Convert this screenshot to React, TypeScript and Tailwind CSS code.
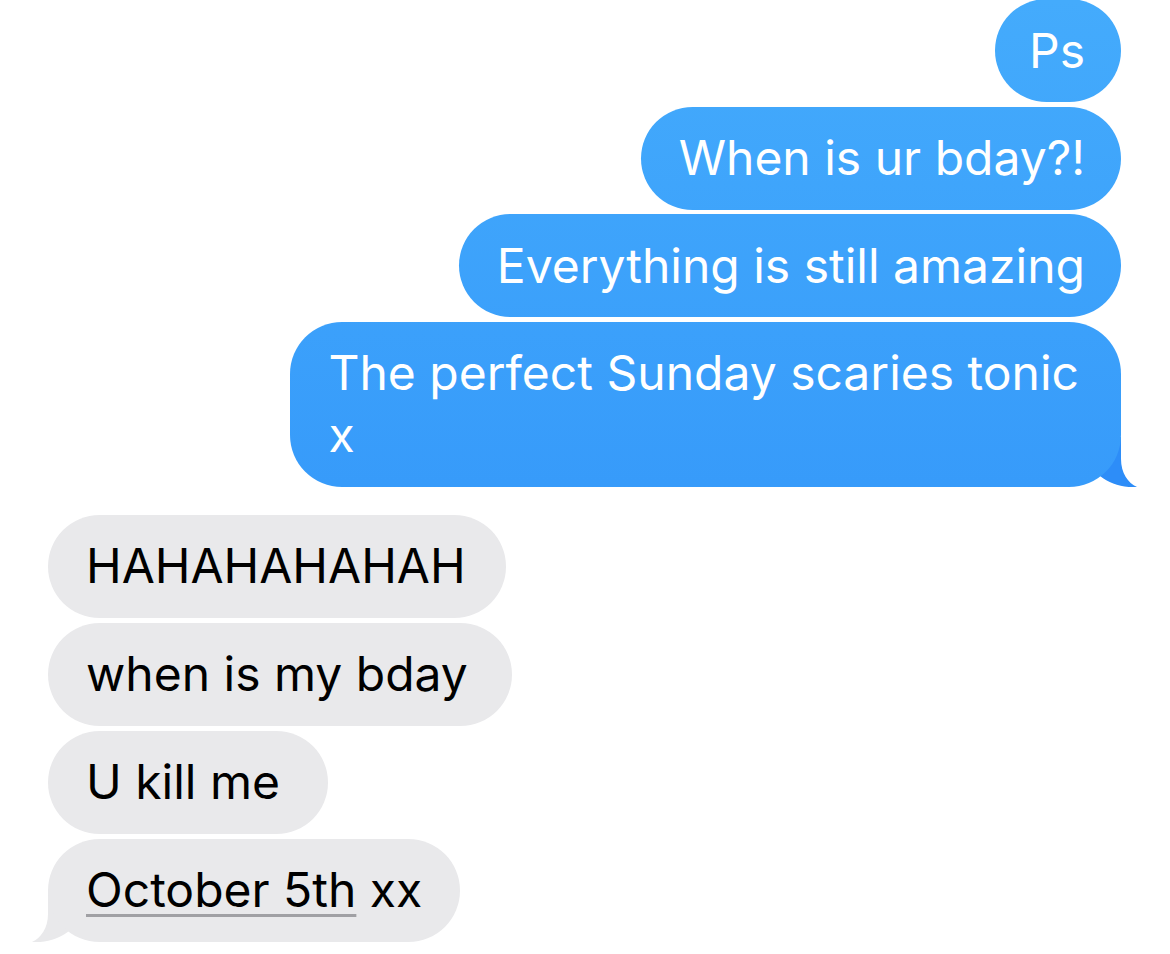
import React from "react";

const font = { fontFamily: "Inter, 'Liberation Sans', Arial, sans-serif" };

function BlueTail() {
  return (
    <svg
      className="absolute right-[-17px] bottom-0"
      width="60"
      height="50"
      viewBox="0 0 60 50"
    >
      <path
        d="M26 0 L43 0 L43 22 C43 36 50 46 59 50 C45 51 32 47 22 39 L10 30 Z"
        fill="#2d8df8"
      />
    </svg>
  );
}

function GrayTail() {
  return (
    <svg
      className="absolute left-[-17px] bottom-0"
      width="60"
      height="50"
      viewBox="0 0 60 50"
    >
      <path
        d="M34 0 L17 0 L17 22 C17 36 10 46 1 50 C15 51 28 47 38 39 L50 30 Z"
        fill="#e9e9eb"
      />
    </svg>
  );
}

function Blue({ children, tail, pl = "pl-[38px]" }: { children: React.ReactNode; tail?: boolean; pl?: string }) {
  return (
    <div className="relative self-end">
      <div className={`relative z-10 rounded-[52px] bg-fixed bg-gradient-to-b from-[#44abfc] to-[#2b8bf8] text-white ${pl} pr-[36px] py-[20.5px] text-[48px] leading-[62px] whitespace-nowrap`}>
        {children}
      </div>
      {tail && <BlueTail />}
    </div>
  );
}

function Gray({ children, tail, pr = "pr-[37px]" }: { children: React.ReactNode; tail?: boolean; pr?: string }) {
  return (
    <div className="relative self-start">
      <div className={`relative z-10 rounded-[52px] bg-[#e9e9eb] text-black pl-[38px] ${pr} py-[20.5px] text-[48px] leading-[62px] whitespace-nowrap`}>
        {children}
      </div>
      {tail && <GrayTail />}
    </div>
  );
}

export default function App() {
  return (
    <div className="w-[1170px] h-[954px] bg-white overflow-hidden" style={font}>
      <div className="flex flex-col pl-[48px] pr-[49px] mt-[-1px]">
        <div className="flex flex-col gap-[4.5px]">
          <Blue pl="pl-[34px]">Ps</Blue>
          <Blue>When is ur bday?!</Blue>
          <Blue>Everything is still amazing</Blue>
          <Blue tail>
            <span className="block pr-[6px]">The perfect Sunday scaries tonic</span>
            <span className="block">x</span>
          </Blue>
        </div>
        <div className="flex flex-col gap-[5px] mt-[28px]">
          <Gray pr="pr-[40px]">HAHAHAHAHAH</Gray>
          <Gray pr="pr-[44px]">when is my bday</Gray>
          <Gray pr="pr-[48px]">U kill me</Gray>
          <Gray tail pr="pr-[38px]">
            <span className="underline decoration-[#a0a0a4] decoration-[3px] underline-offset-[7px]">
              October 5th
            </span>{" "}
            xx
          </Gray>
        </div>
      </div>
    </div>
  );
}
